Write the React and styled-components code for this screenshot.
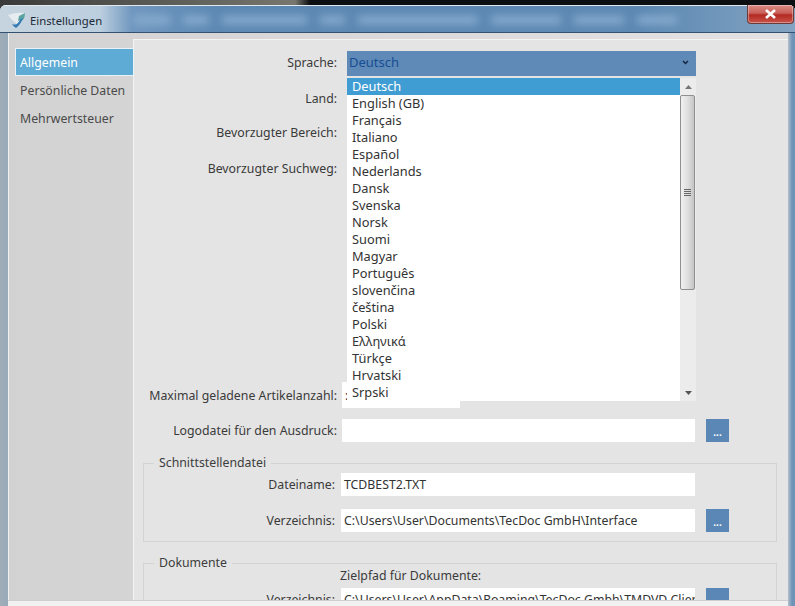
import React from 'react'
import styled, { createGlobalStyle } from 'styled-components'

const Global = createGlobalStyle`
  html, body { margin: 0; padding: 0; background: #000; }
  body { font-family: "Noto Sans", "Open Sans", sans-serif; font-size: 12.3px; color: #3a3a3a; }
  * { box-sizing: border-box; }
`

const Page = styled.div`
  width: 795px;
  height: 606px;
  overflow: hidden;
  padding-top: 5px;
  background: linear-gradient(90deg, #3a3a3a 0, #77776f 295px, #0c0f12 310px);
`
const Frame = styled.div`
  height: 601px;
  border-radius: 6px 6px 0 0;
  background: linear-gradient(90deg, #9fadb8 0, #98a9b8 8px, #b4c0cb 788px, #6f93b6 792px);
  box-shadow: inset 0 1px 0 #e3eaef;
  display: flex;
  flex-direction: column;
  overflow: hidden;
`
const TitleBar = styled.div`
  height: 28px;
  flex: none;
  display: flex;
  align-items: flex-start;
  background: linear-gradient(90deg, #c6d4de 0, #bccfdf 100px, #7097bf 132px, #5c88b2 220px, #5c88b2 640px, #83a4c2 100%);
  border-top: 1px solid #e3eaef;
  border-bottom: 1px solid #34526f;
`
const Logo = styled.svg`
  width: 18px;
  height: 17px;
  margin: 6px 0 0 8px;
  flex: none;
`
const Title = styled.span`
  margin: 6px 0 0 4px;
  font-size: 11.3px;
  line-height: 17px;
  color: #1d2a36;
  width: 104px;
  flex: none;
`
const Blurs = styled.div`
  display: flex;
  gap: 13px;
  margin-top: 10px;
  filter: blur(4px);
  flex: none;
`
const Blur = styled.i`
  display: block;
  height: 8px;
  background: #8aaed1;
  width: ${(p) => p.$w}px;
`
const Close = styled.div`
  margin-left: auto;
  margin-right: 1px;
  width: 47px;
  height: 19px;
  margin-top: -1px;
  flex: none;
  border: 1px solid #6d3a3a;
  border-top: none;
  border-radius: 0 0 4px 4px;
  background: linear-gradient(180deg, #d98c84 0, #c9605a 45%, #b22a22 55%, #c9544a 100%);
  box-shadow: inset 0 0 0 1px rgba(255,255,255,.35);
  display: flex;
  align-items: center;
  justify-content: center;
`
const Body = styled.div`
  flex: 1;
  min-height: 0;
  display: flex;
  margin: 0 7px 0 8px;
  background: linear-gradient(90deg, #d2d2d2 0, #e2e2e2 100%);
  box-shadow: inset 1px 0 0 #eef1f3;
`
const Sidebar = styled.nav`
  width: 125px;
  flex: none;
  padding: 15px 0 0 7px;
  position: relative;
  z-index: 1;
`
const NavItem = styled.div`
  height: 28px;
  width: ${(p) => p.$active ? '119px' : 'auto'};
  padding-left: 5px;
  display: flex;
  align-items: center;
  color: ${(p) => p.$active ? '#fff' : '#4a4a4a'};
  background: ${(p) => p.$active ? '#5eabd6' : 'transparent'};
  box-shadow: ${(p) => p.$active ? 'inset 0 0 0 1px #e8f2f8' : 'none'};
`
const Content = styled.main`
  flex: 1;
  margin-top: 6px;
  background: #e4e4e4;
  border: 1px solid #f4f4f4;
  border-width: 1px 0 0 1px;
  position: relative;
  overflow: hidden;
  padding-top: 11px;
`
const Row = styled.div`
  display: grid;
  grid-template-columns: 203px 358px 23px;
  align-items: center;
  height: ${(p) => p.$h || 24}px;
  margin-bottom: ${(p) => p.$mb || 0}px;
`
const Label = styled.label`
  text-align: right;
  white-space: nowrap;
  padding-bottom: ${(p) => p.$up || 0}px;
`
const Input = styled.div`
  background: #fff;
  height: ${(p) => p.$h || 23}px;
  width: ${(p) => p.$w ? p.$w + 'px' : 'auto'};
  margin-left: 5px;
  padding-left: 3px;
  display: flex;
  align-items: center;
  white-space: nowrap;
  overflow: hidden;
  color: #333;
`
const DotsButton = styled.div`
  width: 23px;
  height: 23px;
  margin-left: 11px;
  background: #5b87b7;
  color: #fff;
  font-size: 10px;
  font-weight: 700;
  line-height: 26px;
  text-align: center;
`
const SelectBox = styled.div`
  width: 349px;
  height: 25px;
  margin-left: 10px;
  padding: 0 7px 3px 2px;
  background: #5f8ab8;
  color: #174d92;
  font-size: 13px;
  display: flex;
  align-items: center;
  justify-content: space-between;
`
const Group = styled.fieldset`
  margin: 0 11px ${(p) => p.$mb || 0}px 9px;
  padding: 0;
  border: 1px solid #d3d3d3;
  min-width: 0;
  height: ${(p) => p.$h}px;
`
const Legend = styled.legend`
  margin-left: 10px;
  padding: 0 5px;
  line-height: 14px;
  color: #3c3c3c;
`
const GroupRow = styled.div`
  display: grid;
  grid-template-columns: 191px 360px 23px;
  align-items: center;
  height: 23px;
  margin-bottom: ${(p) => p.$mb || 0}px;
  margin-top: ${(p) => p.$mt || 0}px;
`
const GroupInput = styled(Input)`
  width: 354px;
  margin-left: 6px;
`
const GroupButton = styled(DotsButton)`
  margin-left: 11px;
`
const Note = styled.div`
  margin: -2px 0 0 196px;
  height: 15px;
  line-height: 15px;
`
const Dropdown = styled.div`
  position: absolute;
  left: 213px;
  top: 38px;
  width: 349px;
  height: 323px;
  display: flex;
  z-index: 2;
`
const List = styled.ul`
  list-style: none;
  margin: 0;
  padding: 0;
  width: 333px;
  background: #fff;
`
const Option = styled.li`
  height: 17px;
  line-height: 17px;
  padding-left: 5px;
  font-size: 12.8px;
  color: ${(p) => p.$selected ? '#fff' : '#333'};
  background: ${(p) => p.$selected ? '#409dd3' : 'transparent'};
`
const Scrollbar = styled.div`
  width: 16px;
  background: #ececec;
  display: flex;
  flex-direction: column;
`
const Arrow = styled.div`
  height: 17px;
  flex: none;
  display: flex;
  align-items: center;
  justify-content: center;
`
const Thumb = styled.div`
  width: 15px;
  height: 195px;
  flex: none;
  border: 1px solid #8f8f8f;
  border-radius: 2px;
  background: linear-gradient(90deg, #f0f0f0 0, #dfdfdf 50%, #c6c6c6 100%);
  display: flex;
  flex-direction: column;
  align-items: center;
  justify-content: center;
  gap: 1px;
`
const Grip = styled.i`
  display: block;
  width: 7px;
  height: 1px;
  background: #666;
`
const Track = styled.div`
  flex: 1;
`
const Footer = styled.div`
  height: 6px;
  flex: none;
  margin: 0 7px 0 8px;
  background: #f1f1f1;
  border-top: 1px solid #cfcfcf;
`
const Edge = styled.div`
  flex: 1;
  min-height: 0;
  display: flex;
  flex-direction: column;
`

const blurs = [36, 26, 85, 25, 120, 70, 50, 40]
const languages = [
  'Deutsch', 'English (GB)', 'Français', 'Italiano', 'Español', 'Nederlands', 'Dansk',
  'Svenska', 'Norsk', 'Suomi', 'Magyar', 'Português', 'slovenčina', 'čeština', 'Polski',
  'Ελληνικά', 'Türkçe', 'Hrvatski', 'Srpski',
]

export default function App() {
  return (
    <Page>
      <Global />
      <Frame>
        <TitleBar>
          <Logo viewBox="0 0 18 17">
            <path d="M0 3 Q8 0 17 1 L9 12 Q4 9 0 3 Z" fill="#e6ecef" />
            <path d="M11 4 L17 1 Q17 5 15 8 L10 9 Z" fill="#5aa3a0" />
            <path d="M15 6 Q13 12 8 16 Q5 14 4 12 Q7 13 9 12 Q12 9 13 7 Z" fill="#2f78b5" />
          </Logo>
          <Title>Einstellungen</Title>
          <Blurs aria-hidden="true">
            {blurs.map((w, i) => <Blur key={i} $w={w} />)}
          </Blurs>
          <Close>
            <svg width="15" height="12" viewBox="0 0 15 12">
              <path d="M3 2 L12 10 M12 2 L3 10" stroke="#fff" strokeWidth="2.6" />
            </svg>
          </Close>
        </TitleBar>
        <Edge>
          <Body>
            <Sidebar>
              <NavItem $active>Allgemein</NavItem>
              <NavItem>Persönliche Daten</NavItem>
              <NavItem>Mehrwertsteuer</NavItem>
            </Sidebar>
            <Content>
              <Row $h={25} $mb={10}>
                <Label $up={2}>Sprache:</Label>
                <SelectBox>
                  Deutsch
                  <svg width="7" height="5" viewBox="0 0 7 5">
                    <path d="M1 1 L3.5 3.5 L6 1" fill="none" stroke="#12233f" strokeWidth="1.4" />
                  </svg>
                </SelectBox>
              </Row>
              <Row $mb={10}><Label>Land:</Label></Row>
              <Row $mb={12}><Label>Bevorzugter Bereich:</Label></Row>
              <Row $mb={202}><Label>Bevorzugter Suchweg:</Label></Row>
              <Row $h={26} $mb={11}>
                <Label>Maximal geladene Artikelanzahl:</Label>
                <Input $h={26} $w={118}>:</Input>
              </Row>
              <Row $h={23} $mb={14}>
                <Label>Logodatei für den Ausdruck:</Label>
                <Input />
                <DotsButton>...</DotsButton>
              </Row>
              <Group $h={86} $mb={14}>
                <Legend>Schnittstellendatei</Legend>
                <GroupRow $mb={13} $mt={3}>
                  <Label>Dateiname:</Label>
                  <GroupInput>TCDBEST2.TXT</GroupInput>
                </GroupRow>
                <GroupRow>
                  <Label>Verzeichnis:</Label>
                  <GroupInput>C:\Users\User\Documents\TecDoc GmbH\Interface</GroupInput>
                  <GroupButton>...</GroupButton>
                </GroupRow>
              </Group>
              <Group $h={86}>
                <Legend>Dokumente</Legend>
                <Note>Zielpfad für Dokumente:</Note>
                <GroupRow $mt={5}>
                  <Label>Verzeichnis:</Label>
                  <GroupInput>C:\Users\User\AppData\Roaming\TecDoc Gmbh\TMDVD Client</GroupInput>
                  <GroupButton>...</GroupButton>
                </GroupRow>
              </Group>
              <Dropdown>
                <List>
                  {languages.map((l, i) => <Option key={l} $selected={i === 0}>{l}</Option>)}
                </List>
                <Scrollbar>
                  <Arrow>
                    <svg width="7" height="4" viewBox="0 0 7 4"><path d="M3.5 0 L7 4 L0 4 Z" fill="#777" /></svg>
                  </Arrow>
                  <Thumb>
                    <Grip /><Grip /><Grip /><Grip />
                  </Thumb>
                  <Track />
                  <Arrow>
                    <svg width="7" height="4" viewBox="0 0 7 4"><path d="M0 0 L7 0 L3.5 4 Z" fill="#555" /></svg>
                  </Arrow>
                </Scrollbar>
              </Dropdown>
            </Content>
          </Body>
          <Footer />
        </Edge>
      </Frame>
    </Page>
  )
}
